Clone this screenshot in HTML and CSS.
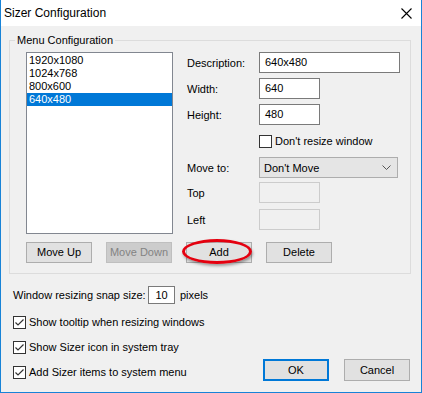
FILE: index.html
```html
<!DOCTYPE html>
<html>
<head>
<meta charset="utf-8">
<link rel="stylesheet" href="styles.css">
</head>
<body>
<div class="window">
  <div class="titlebar">
    <span class="title">Sizer Configuration</span>
    <svg class="close" width="11" height="11" viewBox="0 0 11 11"><path d="M0.5 0.5L10.5 10.5M10.5 0.5L0.5 10.5" stroke="#000" stroke-width="1.1" fill="none"/></svg>
  </div>
  <div class="content">
    <fieldset class="group">
      <legend>Menu Configuration</legend>
      <div class="group-inner">
        <div class="group-top">
          <div class="listbox">
            <div class="item">1920x1080</div>
            <div class="item">1024x768</div>
            <div class="item">800x600</div>
            <div class="item selected">640x480</div>
          </div>
          <div class="form">
            <div class="row"><span class="lbl">Description:</span><div class="input wide">640x480</div></div>
            <div class="row r-width"><span class="lbl">Width:</span><div class="input narrow">640</div></div>
            <div class="row r-height"><span class="lbl">Height:</span><div class="input narrow">480</div></div>
            <div class="row r-check"><span class="lbl"></span><span class="cbox"></span><span class="ctext">Don't resize window</span></div>
            <div class="row r-move"><span class="lbl">Move to:</span><div class="combo"><span>Don't Move</span><svg width="9" height="5" viewBox="0 0 9 5"><path d="M0.5 0.5L4.5 4.5L8.5 0.5" stroke="#555" stroke-width="1" fill="none"/></svg></div></div>
            <div class="row r-top"><span class="lbl">Top</span><div class="input narrow disabled"></div></div>
            <div class="row r-left"><span class="lbl">Left</span><div class="input narrow disabled"></div></div>
          </div>
        </div>
        <div class="btnrow">
          <div class="btn">Move Up</div>
          <div class="btn disabled">Move Down</div>
          <div class="btn-wrap"><div class="btn">Add</div><span class="circle"></span></div>
          <div class="btn">Delete</div>
        </div>
      </div>
    </fieldset>
    <div class="bottom">
      <div class="options">
        <div class="snap"><span class="snap-lbl">Window resizing snap size:</span><div class="input snap-input">10</div><span class="snap-unit">pixels</span></div>
        <div class="opt"><span class="cbox"><svg width="11" height="11" viewBox="0 0 11 11"><path d="M1.5 5.5L4 8L9.5 2.5" stroke="#333" stroke-width="1.2" fill="none"/></svg></span><span class="ctext">Show tooltip when resizing windows</span></div>
        <div class="opt"><span class="cbox"><svg width="11" height="11" viewBox="0 0 11 11"><path d="M1.5 5.5L4 8L9.5 2.5" stroke="#333" stroke-width="1.2" fill="none"/></svg></span><span class="ctext">Show Sizer icon in system tray</span></div>
        <div class="opt"><span class="cbox"><svg width="11" height="11" viewBox="0 0 11 11"><path d="M1.5 5.5L4 8L9.5 2.5" stroke="#333" stroke-width="1.2" fill="none"/></svg></span><span class="ctext">Add Sizer items to system menu</span></div>
      </div>
      <div class="dlg-buttons">
        <div class="btn dlg default">OK</div>
        <div class="btn dlg">Cancel</div>
      </div>
    </div>
  </div>
</div>
</body>
</html>
```
FILE: styles.css
```css
* { box-sizing: border-box; }
html, body { margin: 0; padding: 0; }
body {
  font-family: "Liberation Sans", Arial, sans-serif;
  font-size: 11px;
  color: #000;
  background: #f0f0f0;
}
.window {
  width: 422px;
  height: 393px;
  border-left: 1px solid #1883d7;
  border-right: 1px solid #1883d7;
  border-bottom: 1px solid #1883d7;
  background: #f0f0f0;
  display: flex;
  flex-direction: column;
}
.titlebar {
  height: 26px;
  background: #fff;
  display: flex;
  align-items: center;
  justify-content: space-between;
  padding-left: 3px;
  padding-right: 9px;
}
.title { font-size: 12px; line-height: 14px; }
.close { display: block; }
.content {
  flex: 1;
  padding: 8px 11px 0 8px;
  display: flex;
  flex-direction: column;
}
.group {
  width: 402px;
  margin: 0;
  padding: 0;
  border: 1px solid #dcdcdc;
  min-width: 0;
}
.group legend {
  margin-left: 5px;
  padding: 0 2px;
  line-height: 12px;
  font-size: 11px;
}
.group-inner { padding: 6px 0 10px 16px; }
.group-top { display: flex; }
.listbox {
  width: 147px;
  height: 182px;
  border: 1px solid #828790;
  background: #fff;
  padding: 1px 0 0 0;
}
.item {
  height: 13px;
  line-height: 13px;
  padding-left: 2px;
}
.item.selected { background: #0078d7; color: #fff; }
.form {
  margin-left: 14px;
  display: flex;
  flex-direction: column;
}
.row { display: flex; align-items: center; height: 21px; }
.lbl { width: 72px; flex: none; }
.r-width, .r-height { margin-top: 5px; }
.r-check { margin-top: 10px; height: 13px; }
.r-move { margin-top: 9px; }
.r-top { margin-top: 4px; }
.r-left { margin-top: 6px; }
.input {
  height: 21px;
  border: 1px solid #7a7a7a;
  background: #fff;
  line-height: 19px;
  padding-left: 5px;
}
.input.wide { width: 141px; }
.input.narrow { width: 61px; }
.input.disabled { border-color: #cccccc; background: #f0f0f0; }
.cbox {
  width: 13px;
  height: 13px;
  border: 1px solid #333;
  background: #fff;
  flex: none;
  display: flex;
  align-items: center;
  justify-content: center;
}
.cbox svg { display: block; }
.ctext { margin-left: 3px; line-height: 13px; }
.combo {
  width: 139px;
  height: 21px;
  border: 1px solid #adadad;
  background: #e5e5e5;
  display: flex;
  align-items: center;
  justify-content: space-between;
  padding: 0 6px 0 4px;
}
.combo svg { display: block; }
.btnrow {
  margin-top: 8px;
  display: flex;
  gap: 14px;
}
.btn {
  width: 66px;
  height: 21px;
  border: 1px solid #adadad;
  background: #e1e1e1;
  text-align: center;
  line-height: 19px;
}
.btn.disabled { background: #cccccc; border-color: #bfbfbf; color: #838383; }
.btn-wrap { position: relative; }
.circle {
  position: absolute;
  left: -4px;
  top: -3px;
  width: 70px;
  height: 25px;
  border: 3px solid #e4000f;
  border-radius: 50%;
  box-shadow: 1px 2px 3px rgba(0,0,0,0.35);
}
.bottom {
  display: flex;
  justify-content: space-between;
  align-items: flex-end;
}
.options { padding-left: 4px; padding-bottom: 2px; }
.snap {
  margin-top: 12px;
  display: flex;
  align-items: center;
  height: 18px;
}
.snap-lbl { width: 135px; }
.snap-input {
  width: 27px;
  height: 18px;
  border-color: #7a7a7a;
  line-height: 16px;
  padding-left: 0;
  text-align: center;
}
.snap-unit { margin-left: 5px; }
.opt {
  margin-top: 12px;
  display: flex;
  align-items: center;
  height: 13px;
}
.opt:first-of-type { margin-top: 12px; }
.dlg-buttons {
  display: flex;
  gap: 15px;
}
.btn.dlg { height: 22px; line-height: 20px; }
.btn.default { border: 2px solid #0078d7; line-height: 18px; }
```
